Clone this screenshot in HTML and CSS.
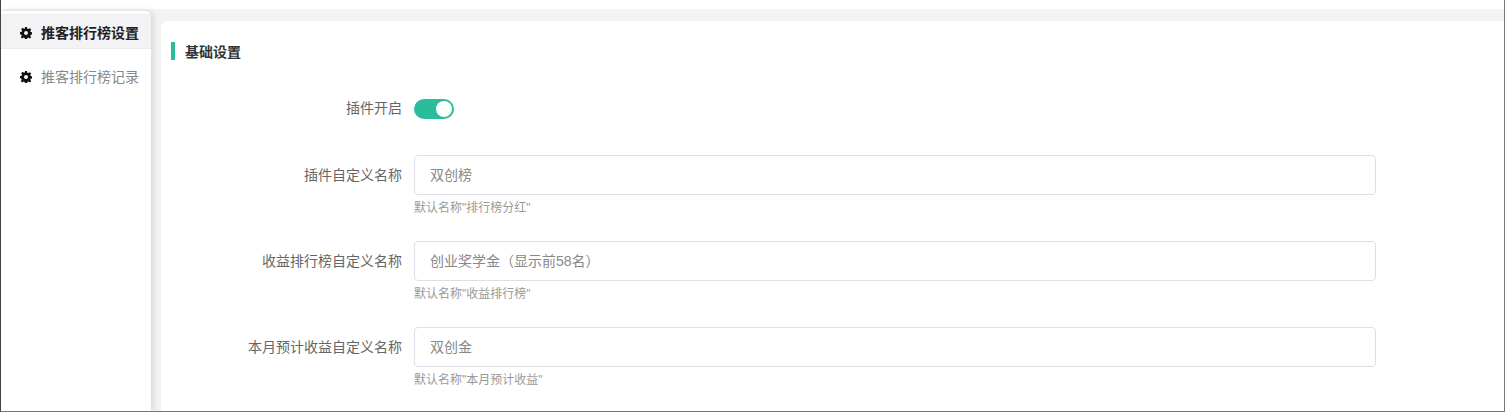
FILE: index.html
```html
<!DOCTYPE html>
<html lang="zh-CN">
<head>
<meta charset="utf-8">
<title>推客排行榜设置</title>
<link rel="stylesheet" href="styles.css">
</head>
<body>
<div class="window">
  <div class="topbar"></div>
  <div class="layout">
    <aside class="sidebar">
      <a class="nav-item active">
        <svg class="gear" viewBox="0 0 24 24"><path fill-rule="evenodd" d="M10 0h4l.6 3.300 2.200.9L19.600 2.300l2.800 2.800-1.900 2.800.9 2.200 3.300.6v4l-3.300.6-.9 2.200 1.900 2.800-2.800 2.800-2.800-1.900-2.200.9-.6 3.300h-4l-.6-3.300-2.200-.9-2.800 1.900-2.800-2.800 1.900-2.800-.9-2.200L0 14v-4l3.300-.6.9-2.200-1.900-2.800 2.800-2.800 2.800 1.900 2.200-.9zM12 8a4 4 0 1 0 0 8 4 4 0 0 0 0-8z"/></svg>
        <span>推客排行榜设置</span>
      </a>
      <a class="nav-item">
        <svg class="gear" viewBox="0 0 24 24"><path fill-rule="evenodd" d="M10 0h4l.6 3.300 2.200.9L19.600 2.300l2.800 2.800-1.900 2.800.9 2.200 3.300.6v4l-3.300.6-.9 2.200 1.900 2.800-2.800 2.800-2.800-1.900-2.200.9-.6 3.300h-4l-.6-3.300-2.200-.9-2.800 1.900-2.800-2.800 1.900-2.800-.9-2.200L0 14v-4l3.300-.6.9-2.200-1.900-2.800 2.800-2.800 2.800 1.900 2.200-.9zM12 8a4 4 0 1 0 0 8 4 4 0 0 0 0-8z"/></svg>
        <span>推客排行榜记录</span>
      </a>
    </aside>
    <main class="panel">
      <h2 class="section-title">基础设置</h2>
      <div class="row row-switch">
        <label class="row-label">插件开启</label>
        <div class="switch"><span class="knob"></span></div>
      </div>
      <div class="row">
        <label class="row-label">插件自定义名称</label>
        <div class="field">
          <input class="input" type="text" value="双创榜">
          <p class="hint">默认名称"排行榜分红"</p>
        </div>
      </div>
      <div class="row">
        <label class="row-label">收益排行榜自定义名称</label>
        <div class="field">
          <input class="input" type="text" value="创业奖学金（显示前58名）">
          <p class="hint">默认名称"收益排行榜"</p>
        </div>
      </div>
      <div class="row">
        <label class="row-label">本月预计收益自定义名称</label>
        <div class="field">
          <input class="input" type="text" value="双创金">
          <p class="hint">默认名称"本月预计收益"</p>
        </div>
      </div>
      <div class="row row-last">
        <label class="row-label">排行榜单</label>
        <div class="field"><span class="clipped">排行榜单</span></div>
      </div>
    </main>
  </div>
</div>
</body>
</html>
```
FILE: styles.css
```css
* { box-sizing: border-box; }
html, body { margin: 0; padding: 0; height: 100%; overflow: hidden; background: #fff; }
body { font-family: "Liberation Sans", "Noto Sans CJK SC", sans-serif; font-size: 14px; color: #666; }
.window {
  width: 1505px; height: 412px; overflow: hidden;
  display: flex; flex-direction: column;
  border-left: 1px solid #444; border-right: 1px solid #777; border-bottom: 1px solid #777;
  background: #fff;
}
.topbar { height: 9px; flex: none; background: #fff; }
.layout { flex: 1; display: flex; background: #f3f3f3; min-height: 0; }
.sidebar {
  width: 150px; flex: none; margin-top: 2px; padding-top: 3px;
  background: #fff; border-top-right-radius: 6px;
  box-shadow: 2px 0 6px rgba(0,0,0,.12);
}
.nav-item {
  height: 35px; display: flex; align-items: center; gap: 9px;
  padding-left: 19px; margin-bottom: 9px; color: #888; font-size: 14px;
}
.nav-item.active { background: #f3f3f5; color: #222; font-weight: 700; border-top: 1px solid #ebebf2; border-bottom: 1px solid #ebebf2; }
.gear { width: 12px; height: 12px; margin-top: 2px; fill: #111; flex: none; }
.panel {
  flex: 1; margin: 12px 0 0 10px; background: #fff; border-top-left-radius: 6px;
  padding: 21px 0 0 10px; overflow: hidden;
}
.section-title {
  margin: 0 0 39px; height: 18px; line-height: 20px; padding-left: 10px;
  border-left: 4px solid #2bbc9b; font-size: 14px; font-weight: 700; color: #333;
}
.row { display: flex; gap: 12px; margin-bottom: 22px; }
.row-switch { align-items: flex-start; margin-bottom: 36px; }
.row-label { width: 231px; flex: none; text-align: right; font-size: 14px; line-height: 40px; color: #666; }
.row-switch .row-label { line-height: 18px; }
.field { width: 962px; flex: none; }
.input {
  display: block; width: 100%; height: 40px; padding: 0 15px 2px;
  border: 1px solid #dfdfe8; border-radius: 4px; background: #fff;
  font: 14px "Liberation Sans", "Noto Sans CJK SC", sans-serif; color: #888; outline: none;
}
.hint { margin: 4px 0 0; font-size: 12px; line-height: 18px; color: #999; height: 20px; }
.row-last { margin-top: -3px; }
.row-last .row-label { line-height: 20px; }
.clipped { display: block; padding-left: 131px; line-height: 20px; color: #666; }
.switch { position: relative; width: 40px; height: 20px; border-radius: 10px; background: #2bbc9b; }
.knob { position: absolute; top: 2px; right: 2px; width: 16px; height: 16px; border-radius: 50%; background: #fff; }
```
